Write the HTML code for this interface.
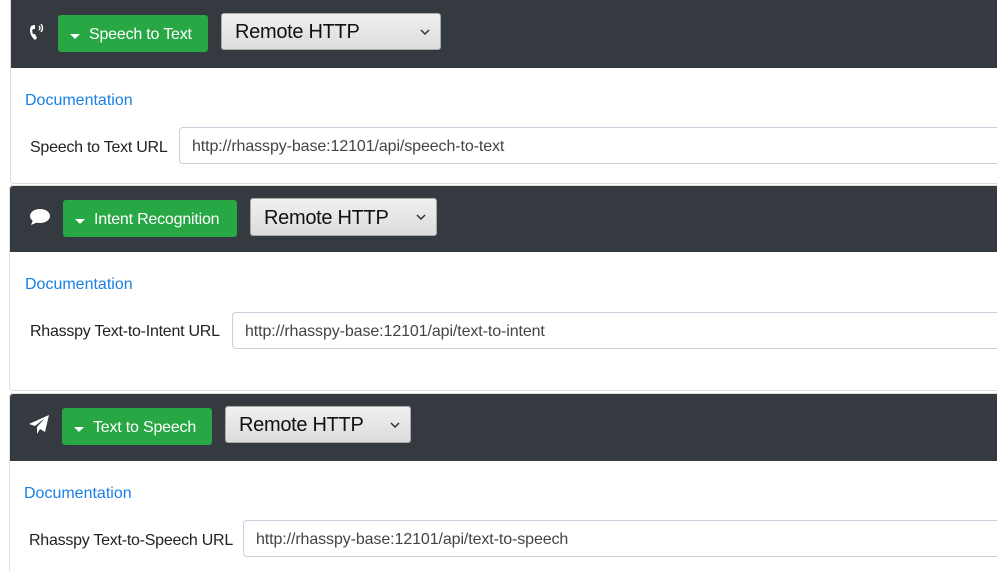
<!DOCTYPE html>
<html><head><style>
*{box-sizing:border-box;margin:0;padding:0}
html,body{width:997px;height:571px;overflow:hidden}
body{background:#fff;font-family:"Liberation Sans",Arial,sans-serif;position:relative}
.card{position:absolute;border:1px solid #dcdcdc;border-radius:4px;overflow:hidden;background:#fff;width:1000px}
.hdr{position:absolute;left:0;top:0;right:0;background:#343a40}
.ab{position:absolute}
.btn{position:absolute;background:#28a745;color:#fff;border-radius:3px;font-size:16px;letter-spacing:-0.2px;display:flex;align-items:center;padding-left:12px;padding-top:3px}
.btn .car{width:0;height:0;border-left:5px solid transparent;border-right:5px solid transparent;border-top:5px solid #fff;margin-right:9px;margin-top:2px}
.sel{position:absolute;background:linear-gradient(#f0f0f0,#dcdcdc);border:1px solid #aaa;border-radius:3px;font-size:20px;letter-spacing:-0.3px;color:#111;padding-left:13px;padding-top:2px;display:flex;align-items:center}
.sel svg{position:absolute;right:10px;top:50%;margin-top:-3px}
.doc{position:absolute;color:#1a7fe8;font-size:16px}
.lbl{position:absolute;color:#222;font-size:16px;letter-spacing:-0.25px}
.inp{position:absolute;border:1px solid #ccd;border-radius:4px;height:37px;right:-10px;font-size:16px;color:#444;padding-left:12px;padding-top:3px;display:flex;align-items:center;letter-spacing:-0.1px}
</style></head><body>

<div class="card" style="left:10px;top:-5px;height:189px">
 <div class="hdr" style="height:72px"></div>
</div>
<svg class="ab" style="left:29px;top:22px" width="18" height="20" viewBox="0 0 18 20"><path d="M5 3 L2 4 C0 8 1 14 6 18 L8 16 L6 12 L4 12 C3 10 3 8 4 7 L6 7 L6 3Z" fill="#fff"/><path d="M10 4 Q12 6 10 8 M12 2 Q15 6 12 10" stroke="#fff" stroke-width="1.4" fill="none"/></svg>
<div class="btn" style="left:58px;top:15px;width:150px;height:37px"><span class="car"></span>Speech to Text</div>
<div class="sel" style="left:221px;top:13px;width:220px;height:37px">Remote HTTP<svg width="10" height="6"><path d="M1 1 L5 5 L9 1" stroke="#333" stroke-width="1.5" fill="none"/></svg></div>
<div class="doc" style="left:25px;top:92px">Documentation</div>
<div class="lbl" style="left:30px;top:139px">Speech to Text URL</div>
<div class="inp" style="left:179px;top:127px;width:830px">http://rhasspy-base:12101/api/speech-to-text</div>

<div class="card" style="left:9px;top:185px;height:206px">
 <div class="hdr" style="height:66px"></div>
</div>
<svg class="ab" style="left:29px;top:208px" width="22" height="18" viewBox="0 0 22 18"><ellipse cx="11" cy="8" rx="10" ry="7" fill="#fff"/><path d="M4 12 L2 17 L9 14Z" fill="#fff"/></svg>
<div class="btn" style="left:63px;top:200px;width:174px;height:37px"><span class="car"></span>Intent Recognition</div>
<div class="sel" style="left:250px;top:198px;width:187px;height:38px">Remote HTTP<svg width="10" height="6"><path d="M1 1 L5 5 L9 1" stroke="#333" stroke-width="1.5" fill="none"/></svg></div>
<div class="doc" style="left:25px;top:276px">Documentation</div>
<div class="lbl" style="left:30px;top:323px">Rhasspy Text-to-Intent URL</div>
<div class="inp" style="left:232px;top:312px;width:780px">http://rhasspy-base:12101/api/text-to-intent</div>

<div class="card" style="left:9px;top:393px;height:190px">
 <div class="hdr" style="height:67px"></div>
</div>
<svg class="ab" style="left:28px;top:414px" width="22" height="22" viewBox="0 0 22 22"><path d="M21 1 L1 10 L7 12 L17 4 L9 13 L9 20 L12 15 L17 18Z" fill="#fff"/></svg>
<div class="btn" style="left:62px;top:408px;width:150px;height:37px"><span class="car"></span>Text to Speech</div>
<div class="sel" style="left:225px;top:406px;width:186px;height:37px">Remote HTTP<svg width="10" height="6"><path d="M1 1 L5 5 L9 1" stroke="#333" stroke-width="1.5" fill="none"/></svg></div>
<div class="doc" style="left:24px;top:485px">Documentation</div>
<div class="lbl" style="left:29px;top:532px">Rhasspy Text-to-Speech URL</div>
<div class="inp" style="left:243px;top:520px;width:770px">http://rhasspy-base:12101/api/text-to-speech</div>

</body></html>
